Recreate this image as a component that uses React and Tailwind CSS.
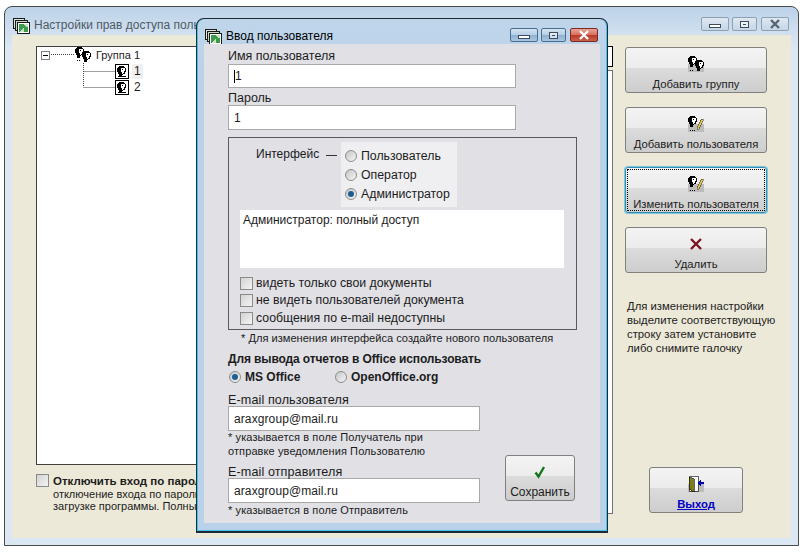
import React from 'react';

const btnBg = 'bg-[linear-gradient(#f3f3f3_0%,#ececec_45%,#dcdcdc_46%,#cdcdcd_100%)]';

const Head = ({ x = 0, y = 0 }) => (
  <g transform={`translate(${x} ${y})`}>
    <path d="M2 0h5v1h1v1h1v4H8v2H6v1H5v2H2V8H1V6H0V2h1V1h1z" fill="#000" />
    <path d="M4 2h4v3H7v2H6v1H5V6H4z" fill="#fff" />
    <path d="M5 3h1v1H5z" fill="#000" />
  </g>
);

const GroupIcon = () => (
  <svg width="16" height="16" viewBox="0 0 16 16" shapeRendering="crispEdges">
    <Head x={0} y={0} />
    <Head x={7} y={4} />
    <path d="M2 13h1v1H2zM4 13h1v1H4z" fill="#000" />
  </svg>
);

const UserFrameIcon = () => (
  <svg width="14" height="15" viewBox="0 0 14 15" shapeRendering="crispEdges">
    <rect x="0.5" y="0.5" width="13" height="14" fill="#fff" stroke="#000" />
    <Head x={2} y={2} />
    <path d="M3 12h8v1H3z" fill="#000" />
  </svg>
);

const GroupBtnIcon = () => (
  <svg width="16" height="16" viewBox="0 0 16 16" shapeRendering="crispEdges">
    <rect x="0" y="8" width="16" height="8" fill="#bcbcbc" />
    <Head x={0} y={0} />
    <Head x={7} y={4} />
    <path d="M2 14h1v1H2zM4 14h1v1H4z" fill="#000" />
  </svg>
);

const EditUserIcon = () => (
  <svg width="16" height="16" viewBox="0 0 16 16" shapeRendering="crispEdges">
    <rect x="0" y="8" width="16" height="8" fill="#bcbcbc" />
    <Head x={0} y={0} />
    <path d="M2 14h1v1H2zM4 14h1v1H4zM6 14h1v1H6z" fill="#000" />
    <path d="M13 3h2v2h-1v2h-1v2h-1v2h-1v2H9v-3h1V8h1V6h1V4h1z" fill="#e8c84a" stroke="#333" strokeWidth="0.5" />
  </svg>
);

const DeleteIcon = () => (
  <svg width="14" height="14" viewBox="0 0 14 14">
    <path d="M2 2l10 10M12 2L2 12" stroke="#7a1420" strokeWidth="2.4" />
  </svg>
);

const CheckIcon = () => (
  <svg width="14" height="14" viewBox="0 0 14 14">
    <path d="M2.5 7.5l3 4L11 2" fill="none" stroke="#16761a" strokeWidth="2.4" />
  </svg>
);

const ExitIcon = () => (
  <svg width="16" height="16" viewBox="0 0 16 16" shapeRendering="crispEdges">
    <rect x="0" y="8" width="16" height="8" fill="#bcbcbc" />
    <rect x="1" y="0" width="9" height="15" fill="#fff" stroke="#000" strokeWidth="0.6" />
    <path d="M1 1l5 2v13l-5-3z" fill="#7d7d20" stroke="#000" strokeWidth="0.6" />
    <path d="M11 5h1V4h1v2h3v2h-3v2h-1V9h-1V8h-1V6h1z" fill="#0000b0" />
  </svg>
);

const FoldersIcon = () => (
  <svg width="17" height="17" viewBox="0 0 17 17" shapeRendering="crispEdges">
    <rect x="0.5" y="1.5" width="11" height="10" fill="#dfe8d8" stroke="#1a1a1a" />
    <rect x="2.5" y="3.5" width="12" height="10" fill="#c7d8c0" stroke="#1a1a1a" />
    <rect x="4.5" y="5.5" width="12" height="11" fill="#fff" stroke="#1a1a1a" />
    <rect x="6" y="7" width="9" height="8" fill="#3d9a4a" />
    <path d="M6 15l5-5v5zM11 7h4v3h-2z" fill="#c9e0c4" />
  </svg>
);

const WinButtons = ({ active }) => {
  const frame = active
    ? 'border-[#4d6f8f] bg-[linear-gradient(#d3e3f1_0%,#b6cfe6_48%,#8fb0cf_52%,#a9c7e2_100%)]'
    : 'border-[#8ea0b2] bg-[linear-gradient(#dfe8f1,#c5d6e6)]';
  return (
    <div className="flex gap-[3px] h-[14px]">
      <div className={`w-[28px] h-full rounded-[2px] border flex items-center justify-center ${frame}`}>
        <div className="w-[12px] h-[4px] mt-[3px] border border-[#3d4d5d] bg-white" />
      </div>
      <div className={`w-[25px] h-full rounded-[2px] border flex items-center justify-center ${frame}`}>
        <div className="w-[9px] h-[7px] border border-[#3d4d5d] bg-white/60 flex items-center justify-center">
          <div className="w-[3px] h-[1px] bg-[#3d4d5d]" />
        </div>
      </div>
      <div
        className={`w-[28px] h-full rounded-[2px] border flex items-center justify-center ml-[1px] ${
          active
            ? 'border-[#7d2a20] bg-[linear-gradient(#e8a598_0%,#d9705f_48%,#b93a28_52%,#c9604a_100%)]'
            : frame
        }`}
      >
        <svg width="12" height="10" viewBox="0 0 12 10">
          <path
            d="M2 1l8 8M10 1L2 9"
            fill="none"
            stroke={active ? '#fff' : '#566676'}
            strokeWidth="2.4"
          />
        </svg>
      </div>
    </div>
  );
};

const ToolButton = ({ icon, children, focused, className = '', labelClass = 'text-[11.3px]' }) => (
  <div
    className={`relative rounded-[3px] border flex flex-col items-center ${btnBg} ${
      focused ? 'border-[#2f8fb4] shadow-[0_0_0_1px_#7cc4de]' : 'border-[#808080]'
    } ${className}`}
  >
    <div className="h-[16px] mt-[8px] flex items-center justify-center">{icon}</div>
    <div className={`mt-[5px] leading-[14px] whitespace-nowrap ${labelClass}`}>{children}</div>
    {focused && <div className="absolute inset-[1px] border border-dotted border-black" />}
  </div>
);

const Radio = ({ checked }) => (
  <span className="w-[12px] h-[12px] rounded-full border border-[#8d8d8d] bg-[linear-gradient(135deg,#c6c6c6,#f5f5f5)] flex items-center justify-center shrink-0">
    {checked && <span className="w-[6px] h-[6px] rounded-full bg-[#1d5f94]" />}
  </span>
);

const Check = () => (
  <span className="w-[13px] h-[13px] border border-[#8a8a8a] bg-[linear-gradient(135deg,#d2d2d2,#f4f4f4)] shrink-0" />
);

const Field = ({ className = '', children }) => (
  <div className={`bg-white border border-[#a9a9a9] flex items-center pl-[5px] text-[12px] ${className}`}>
    {children}
  </div>
);

const CheckRow = ({ children, className = '' }) => (
  <div className={`flex items-center gap-[3px] h-[14px] text-[12.3px] ${className}`}>
    <Check />
    <span>{children}</span>
  </div>
);

export default function App() {
  return (
    <div
      className="relative w-[808px] h-[552px] overflow-hidden bg-white pl-[4px] pt-[6px] text-[#1c1c1c] text-[12px]"
      style={{ fontFamily: '"Liberation Sans", Arial, sans-serif' }}
    >
      {/* main window */}
      <div className="w-[795px] h-[540px] rounded-t-[8px] border border-[#4a4a4a] bg-[linear-gradient(#bcd2e8_0px,#dbe7f3_40px,#dbe7f3_100%)] px-[7px] pb-[7px] flex flex-col">
        <div className="h-[28px] shrink-0 flex items-start justify-between">
          <div className="flex items-center gap-[4px] pt-[9px] pl-[1px]">
            <FoldersIcon />
            <span className="text-[12px] text-[#4e5a66] whitespace-nowrap">Настройки прав доступа поль</span>
          </div>
          <div className="pt-[10px] pr-[2px]">
            <WinButtons />
          </div>
        </div>

        <div className="flex-1 bg-[#ece9d8] flex pl-[24px] pt-[11px]">
          {/* tree + checkbox */}
          <div className="w-[190px] shrink-0">
            <div className="relative h-[419px] bg-white border border-[#404040] w-[300px]">
              <svg className="absolute left-0 top-0" width="110" height="60">
                <path
                  d="M14 7.5H38M46.5 16V40M46.5 24.5H78M46.5 40.5H78"
                  stroke="#444"
                  strokeDasharray="1 1"
                  fill="none"
                />
              </svg>
              <div className="relative h-[15px] flex items-center">
                <div className="absolute left-[4px] top-[4px] w-[9px] h-[9px] border border-[#808080] bg-white flex items-center justify-center">
                  <div className="w-[5px] h-[1px] bg-black" />
                </div>
                <div className="absolute left-[38px] top-0"><GroupIcon /></div>
                <span className="absolute left-[59px] top-[1px] leading-[14px] text-[11px] whitespace-nowrap">Группа 1</span>
              </div>
              <div className="relative ml-[78px] mt-[2px] h-[15px] flex items-center gap-[3px]">
                <UserFrameIcon />
                <span className="bg-[#f0f0f0] px-[2px] h-[15px] leading-[15px]">1</span>
              </div>
              <div className="relative ml-[78px] mt-[1px] h-[15px] flex items-center gap-[3px]">
                <UserFrameIcon />
                <span className="px-[2px] leading-[15px]">2</span>
              </div>
            </div>
            <div className="flex gap-[4px] mt-[9px] whitespace-nowrap">
              <Check />
              <div className="text-[11px] leading-[12px]">
                <div className="font-bold text-[11.5px] leading-[14px]">Отключить вход по паролю</div>
                <div>отключение входа по паролю при</div>
                <div>загрузке программы. Полный доступ</div>
              </div>
            </div>
          </div>

          {/* grid behind the dialog */}
          <div className="w-[387px] shrink-0 ml-[0px]">
            <div className="h-[21px] bg-white border border-black" />
            <div className="h-[444px] mt-[3px] bg-white border border-[#707070]" />
          </div>

          {/* right buttons */}
          <div className="ml-[12px] mt-[1px] w-[142px] flex flex-col">
            <ToolButton icon={<GroupBtnIcon />} className="h-[46px]">Добавить группу</ToolButton>
            <ToolButton icon={<EditUserIcon />} className="h-[46px] mt-[14px]">Добавить пользователя</ToolButton>
            <ToolButton icon={<EditUserIcon />} className="h-[46px] mt-[14px]" focused>Изменить пользователя</ToolButton>
            <ToolButton icon={<DeleteIcon />} className="h-[46px] mt-[14px]">Удалить</ToolButton>
            <div className="mt-[26px] ml-[2px] text-[11.3px] leading-[14px] whitespace-nowrap">
              <div>Для изменения настройки</div>
              <div>выделите соответствующую</div>
              <div>строку затем установите</div>
              <div>либо снимите галочку</div>
            </div>
            <ToolButton
              icon={<ExitIcon />}
              className="h-[46px] w-[94px] ml-[24px] mt-[112px]"
              labelClass="text-[11.3px] font-bold underline text-[#0000c8]"
            >
              Выход
            </ToolButton>
          </div>
        </div>
      </div>

      {/* dialog */}
      <div className="absolute left-[196px] top-[18px] w-[412px] h-[515px] rounded-t-[8px] border border-[#1e2a36] border-b-2 bg-[linear-gradient(#bfd5ea_0px,#b9d2ea_60px)] px-[7px] pb-[8px] flex flex-col shadow-[inset_0_-1px_0_#3fc4ee,inset_-1px_0_0_#3fc4ee,inset_1px_0_0_#3fc4ee]">
        <div className="h-[25px] shrink-0 flex items-start justify-between">
          <div className="flex items-center gap-[4px] pt-[8px] pl-[1px]">
            <FoldersIcon />
            <span className="text-[12px] text-black whitespace-nowrap">Ввод пользователя</span>
          </div>
          <div className="pt-[9px] pr-[2px]">
            <WinButtons active />
          </div>
        </div>

        <div className="flex-1 bg-[#e0e0e5] pl-[24px] flex flex-col">
          <div className="h-[14px] mt-[4px] leading-[16px] text-[12.5px]">Имя пользователя</div>
          <Field className="w-[288px] h-[24px] mt-[2px]">
            <span className="w-[1px] h-[13px] bg-black" />
            <span>1</span>
          </Field>
          <div className="h-[14px] mt-[3px] leading-[14px] text-[12.5px]">Пароль</div>
          <Field className="w-[288px] h-[25px]">1</Field>

          <div className="relative w-[349px] h-[193px] mt-[7px] border border-[#5a5a5a] pl-[11px] pt-[4px]">
            <div className="flex">
              <div className="w-[101px] flex pt-[5px] pl-[16px] items-start">
                <span className="leading-[14px]">Интерфейс</span>
                <span className="w-[11px] h-[1px] bg-[#333] ml-[7px] mt-[8px] shrink-0" />
              </div>
              <div className="w-[116px] h-[65px] bg-[#efeff1] pl-[4px] pt-[7px] flex flex-col gap-[5px] text-[12.3px]">
                <div className="flex items-center gap-[4px] h-[14px]"><Radio /> Пользователь</div>
                <div className="flex items-center gap-[4px] h-[14px]"><Radio /> Оператор</div>
                <div className="flex items-center gap-[4px] h-[14px]"><Radio checked /> Администратор</div>
              </div>
            </div>
            <div className="w-[324px] h-[58px] mt-[3px] bg-white pl-[3px] pt-[3px] leading-[14px]">Администратор: полный доступ</div>
            <CheckRow className="mt-[8px]">видеть только свои документы</CheckRow>
            <CheckRow className="mt-[3px]">не видеть пользователей документа</CheckRow>
            <CheckRow className="mt-[4px]">сообщения по e-mail недоступны</CheckRow>
          </div>

          <div className="mt-[1px] ml-[13px] h-[14px] leading-[14px] text-[11.1px]">* Для изменения интерфейса создайте нового пользователя</div>
          <div className="mt-[7px] h-[14px] leading-[14px] font-bold tracking-[-0.12px]">Для вывода отчетов в Office использовать</div>
          <div className="flex items-center h-[14px] mt-[4px] font-bold">
            <div className="w-[107px] flex items-center gap-[4px] pl-[1px]"><Radio checked /> MS Office</div>
            <div className="flex items-center gap-[4px]"><Radio /> OpenOffice.org</div>
          </div>

          <div className="flex mt-[8px]">
            <div className="w-[252px]">
              <div className="h-[14px] leading-[16px] text-[12.6px] tracking-[0.1px]">E-mail пользователя</div>
              <Field className="h-[25px] tracking-[0.1px]">araxgroup@mail.ru</Field>
              <div className="text-[11px] leading-[14px] mt-[-1px] whitespace-nowrap tracking-[0.1px]">
                <div>* указывается в поле Получатель при</div>
                <div>отправке уведомления Пользователю</div>
              </div>
              <div className="h-[14px] leading-[16px] mt-[6px] text-[12.6px] tracking-[0.1px]">E-mail отправителя</div>
              <Field className="h-[25px] tracking-[0.1px]">araxgroup@mail.ru</Field>
              <div className="text-[11px] leading-[14px] whitespace-nowrap tracking-[0.1px]">* указывается в поле Отправитель</div>
            </div>
            <ToolButton icon={<CheckIcon />} className="w-[70px] h-[46px] ml-[25px] mt-[63px]" labelClass="text-[12px]">Сохранить</ToolButton>
          </div>
        </div>
      </div>
    </div>
  );
}
